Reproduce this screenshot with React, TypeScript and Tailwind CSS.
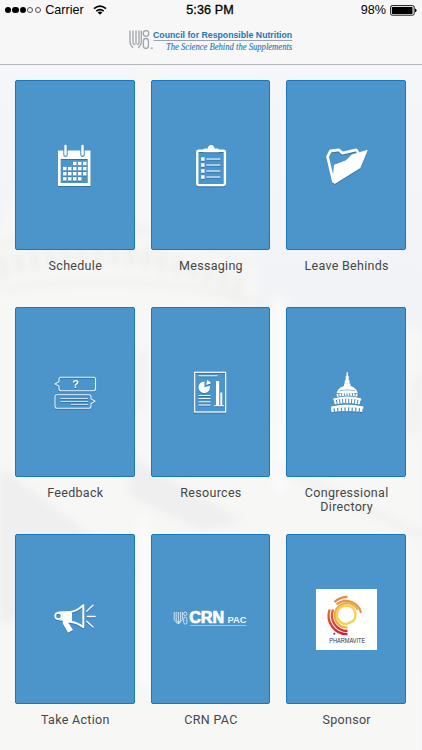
import type { ReactNode } from 'react';

type Tile = { id: string; label: string; icon: ReactNode };

function Icon({ children }: { children: ReactNode }) {
  return (
    <svg viewBox="0 0 60 60" className="h-[60px] w-[60px] overflow-visible drop-shadow-[0_1px_0.5px_rgba(20,80,140,0.5)]" fill="none" stroke="none">
      {children}
    </svg>
  );
}

function CalendarIcon() {
  const rows = [[2, 3, 4], [0, 1, 2, 3, 4], [0, 1, 2, 3, 4], [0, 1, 2, 3]];
  return (
    <Icon>
      <path fill="#fff" fillRule="evenodd" d="M13 15.5h32.5V51H13zM15.7 24v24h27V24z" />
      <path stroke="#4b95cb" strokeWidth="4.5" strokeLinecap="round" d="M20.5 15v4.8M37.5 15v4.8" />
      <path stroke="#fff" strokeWidth="2.4" strokeLinecap="round" d="M20.5 11v8.5M37.5 11v8.5" />
      {rows.map((cols, r) =>
        cols.map((c) => <rect key={`${r}-${c}`} x={18 + c * 5} y={26.8 + r * 5.1} width="3.5" height="3.5" fill="#fff" />)
      )}
    </Icon>
  );
}

function ClipboardIcon() {
  return (
    <Icon>
      <g transform="translate(.7 .3)">
        <rect x="16.6" y="15.4" width="27.6" height="34.4" rx="1.5" stroke="#fff" strokeWidth="2.4" />
        <path fill="#fff" d="M22.5 17v-1.8c0-1.4.8-1.9 1.8-1.9h2.7c.3-2.2 1.4-3.5 3.4-3.5s3.1 1.3 3.4 3.5h2.7c1 0 1.8.5 1.8 1.9V17z" />
        {[22, 28, 34, 40].map((y) => (
          <g key={y} fill="#fff">
            <rect x="20.4" y={y} width="3.5" height="3.5" />
            <rect x="25.6" y={y + 1.2} width="14" height="1.1" />
          </g>
        ))}
      </g>
    </Icon>
  );
}

function FolderIcon() {
  return (
    <Icon>
      <g transform="translate(.5 .3)">
        <path stroke="#fff" strokeWidth="2.8" strokeLinejoin="round" strokeLinecap="round" d="M16.8 46 11 21.5l3-5.8 8.2-1.2 3.8 3.3L39.6 14.5l1.6 2.2" />
        <path fill="#fff" stroke="#fff" strokeWidth="1.2" strokeLinejoin="round" d="M16.4 46.8 18 30l11.3-4.2 6.2-6 15-4.6-7.2 17.2-25 15.5z" />
      </g>
    </Icon>
  );
}

function FeedbackIcon() {
  return (
    <Icon>
      <path stroke="#e8f4fc" strokeWidth="1.1" strokeLinejoin="round" d="M15 15.3h33.5q2 0 2 2v9.4q0 2-2 2H16q-2 0-2-2v-2.5L10 22l4-2.2v-2.5q0-2 2-2z" />
      <path stroke="#e8f4fc" strokeWidth="1.1" strokeLinejoin="round" d="M12 32.7h32q2 0 2 2v2.2l4 2.4-4 2.4v2.5q0 2-2 2H12q-2 0-2-2v-9.5q0-2 2-2z" />
      <path stroke="#e8f4fc" strokeWidth="0.8" d="M15.5 36.5H43M15.5 39.5H43M26 42.5h17" />
      <text x="30.7" y="26" textAnchor="middle" fill="#fff" className="font-['Liberation_Sans'] text-[11px] font-bold">?</text>
    </Icon>
  );
}

function ReportIcon() {
  return (
    <Icon>
      <g transform="translate(.5 0)">
        <rect x="14.2" y="10.3" width="31" height="39.7" stroke="#fff" strokeWidth="1.2" />
        <path stroke="#fff" strokeWidth="1" d="M18 13.8h19M18 33.5h12M18 36.6h12M18 39.8h12M18 43h12" />
        <path fill="#fff" d="M24 19.5v5.7l5.3-1.5a5.8 5.8 0 1 1-5.3-4.2z" />
        <path fill="#fff" d="m25.7 23 1-5 1.6 1.3 1.2.4.8 1.8z" />
        <path fill="#fff" d="M35.5 19h3.2v24.5h-3.2zM39.8 30.5h2v13h-2zM33.5 43.3h10v1h-10z" />
      </g>
    </Icon>
  );
}

function CapitolIcon() {
  return (
    <Icon>
      <path fill="#fff" d="M30.7 10h1l.4 4.2h.7v4.3h.8v3.3h-4.9v-3.3h.9v-4.3h.7z" />
      <path fill="#fff" d="M28 21.5h6.5v2.5c3.8 1 6.6 3.8 7.4 7.2H20.7c.7-3.4 3.5-6.2 7.3-7.2z" />
      <path stroke="#fff" strokeWidth="3" strokeDasharray="1.9 0.8" d="M20.7 33.6q10.6-2.2 21.2 0" />
      <path fill="#fff" d="M17.3 38.6v-2.2q14-4.4 28 0v2.2q-14-3.6-28 0z" />
      <path stroke="#fff" strokeWidth="4.6" strokeDasharray="2.1 0.9" d="M18.2 40.4q13-3 26.2 0" />
      <path fill="#fff" d="M15.2 46.8v-2.4q16-3.6 32.2 0v2.4q-16-2.4-32.2 0z" />
      <path stroke="#fff" strokeWidth="4" strokeDasharray="2.5 1.1" d="M15.2 48.2q16-2 32.4 0" />
      <path stroke="#4b95cb" strokeWidth="0.6" d="M23.5 28.8q7.5-2 15.5 0M19.4 35.2q12-2.8 24 0M17 43.2q14-2.6 28.6 0" />
    </Icon>
  );
}

function MegaphoneIcon() {
  return (
    <Icon>
      <circle cx="13.4" cy="27" r="3.2" stroke="#fff" strokeWidth="1.8" />
      <path fill="#fff" d="M12.5 22.5 26.5 22v11.5l-3.2.3L28 41l-5 2.7-5.3-9.3v-3l-4.2.3q3.9-1 3.9-4.7 0-3.8-4.9-4.5z" />
      <path stroke="#fff" strokeWidth="2" strokeLinejoin="round" d="M26 22.8q6-.7 12.3-6.7v22.2q-5.8-4.7-12.3-5.3z" />
      <path stroke="#fff" strokeWidth="1.3" strokeLinecap="round" d="m41.7 22.3 6.3-6M42.2 27.5h8M41.7 32.2l6.3 5.8" />
    </Icon>
  );
}

function CrnPacLogo() {
  return (
    <svg viewBox="0 0 90 60" className="h-[60px] w-[90px] overflow-visible" fill="none">
      <g stroke="#d9edfa" strokeWidth="0.9">
        <path d="M9.2 23v7.5l3.2 4.2M11.2 23v8l2.5 3.5M13.4 23v12M15.6 23v8l-2 3.5M17.4 23v7.5l-3.2 4.2" />
        <circle cx="20.3" cy="24.8" r="1.7" />
        <rect x="18.7" y="28" width="3.2" height="7" rx="1.5" />
      </g>
      <text x="24.2" y="34.2" textLength="35" lengthAdjust="spacingAndGlyphs" fill="#fff" stroke="#fff" strokeWidth="0.7" className="font-['Liberation_Sans'] text-[15.6px] font-bold">CRN</text>
      <text x="62.5" y="34.2" textLength="19" lengthAdjust="spacingAndGlyphs" fill="#eef7fd" className="font-['Liberation_Sans'] text-[8.8px] font-bold">PAC</text>
      <path stroke="#a9d2ee" strokeWidth="0.8" d="M25 36.5h56.5" />
    </svg>
  );
}

function PharmaviteLogo() {
  return (
    <svg viewBox="0 0 61 61" className="h-[61px] w-[61px] overflow-visible bg-white" fill="none">
      <defs>
        <linearGradient id="ember" gradientUnits="userSpaceOnUse" x1="0" y1="8" x2="0" y2="46">
          <stop offset="0" stopColor="#ee8a3c" />
          <stop offset="0.5" stopColor="#e2583a" />
          <stop offset="1" stopColor="#c9202f" />
        </linearGradient>
      </defs>
      <g stroke="url(#ember)" strokeWidth="2.3">
        <path d="M31.5 7.8A18.7 18.7 0 0 0 18.5 13" />
        <path d="M13.6 20.5A18.7 18.7 0 0 0 31.5 45.2" />
        <path d="M17 20.5A15.7 15.7 0 0 0 31.5 42" />
      </g>
      <path stroke="#ee9440" strokeWidth="2.1" d="M20.5 15.4A15.2 15.2 0 0 1 45 24" />
      <path stroke="#f3ab43" strokeWidth="2.2" d="M31.5 38.7A12.3 12.3 0 1 1 42 21" />
      <path stroke="#f8cf55" strokeWidth="2.4" d="M31.5 35A9.3 9.3 0 1 1 37.5 31.5Q34.5 34 31.5 34" />
      <circle cx="18.3" cy="44.8" r="1" fill="#4b4b4b" />
      <text x="13.2" y="54" textLength="36" lengthAdjust="spacingAndGlyphs" fill="#333" className="font-['Liberation_Sans'] text-[6.4px]">PHARMAVITE</text>
    </svg>
  );
}

function CouncilLogo() {
  return (
    <svg viewBox="0 0 174 26" className="h-[26px] w-[174px] overflow-visible" fill="none">
      <g transform="translate(4 0)">
        <g stroke="#a3a5a8" strokeWidth="1.3">
          <path d="M2 2.5V14.5q0 2 3 5.3M5 2.5V15l1.6 2M8 2.5v14M11 2.5V15l-1.6 2M13.3 2.5v12q0 2-3 5.3" />
          <circle cx="18" cy="5.5" r="2.8" />
          <rect x="15.4" y="10.5" width="5" height="10" rx="2.4" />
        </g>
        <circle cx="23.8" cy="20.2" r="1" fill="#a3a5a8" />
        <text x="25" y="10" textLength="139.2" lengthAdjust="spacingAndGlyphs" fill="#2176b9" className="font-['Liberation_Sans'] text-[9.5px] font-bold">Council for Responsible Nutrition</text>
        <path stroke="#9b9fb0" strokeWidth="1" d="M25.5 12.5h138.8" />
        <text x="38" y="22.1" textLength="126.2" lengthAdjust="spacingAndGlyphs" fill="#2a7dbd" stroke="#2a7dbd" strokeWidth="0.15" className="font-['Liberation_Serif'] text-[9.8px] italic">The Science Behind the Supplements</text>
      </g>
    </svg>
  );
}

function StatusBar() {
  return (
    <div className="grid h-5 grid-cols-3 items-center pr-[5px] pl-[5px] text-[12.6px] leading-5 text-black">
      <div className="flex items-center">
        <div className="flex gap-[1.2px]">
          {[1, 2, 3].map((n) => (
            <span key={n} className="h-[6.2px] w-[6.2px] rounded-full bg-black" />
          ))}
          {[4, 5].map((n) => (
            <span key={n} className="h-[6.2px] w-[6.2px] rounded-full border border-neutral-600" />
          ))}
        </div>
        <span className="ml-[4.5px]">Carrier</span>
        <svg viewBox="0 0 14 10" className="ml-[9px] h-[10px] w-[14px]" fill="none" stroke="#000" strokeWidth="1.7">
          <path d="M1 3.7q6-5.2 12 0M3.3 6.2q3.7-3.2 7.4 0" />
          <path fill="#000" stroke="none" d="m7 9.8-2.3-2.4q2.3-1.8 4.6 0z" />
        </svg>
      </div>
      <div className="pr-[2px] text-center tracking-[0.1px] [-webkit-text-stroke:0.3px_black]">5:36 PM</div>
      <div className="flex items-center justify-end gap-[4px]">
        <span>98%</span>
        <svg viewBox="0 0 27 11" className="h-[11px] w-[27px]">
          <rect x="0.6" y="0.6" width="23.6" height="9.6" rx="1.6" fill="none" stroke="#000" strokeWidth="0.9" />
          <rect x="1.9" y="1.9" width="20.6" height="7" rx="0.5" />
          <path d="M25 3.6q1.6.5 1.6 1.8T25 7.2z" />
        </svg>
      </div>
    </div>
  );
}

// faded capitol dome behind the tiles
function Backdrop() {
  return (
    <svg viewBox="0 0 422 685" preserveAspectRatio="none" className="absolute inset-0 h-full w-full" fill="none">
      <defs>
        <linearGradient id="sky" x1="0" y1="0" x2="0" y2="1">
          <stop offset="0" stopColor="#f4f6fa" />
          <stop offset="0.35" stopColor="#f1f3f6" />
          <stop offset="0.5" stopColor="#f5f5f5" />
          <stop offset="1" stopColor="#f6f6f5" />
        </linearGradient>
        <filter id="soft">
          <feGaussianBlur stdDeviation="4" />
        </filter>
      </defs>
      <path fill="url(#sky)" d="M0 0h422v685H0z" />
      <g filter="url(#soft)">
        <path fill="#f7f7f6" d="M130 0h28l10 35q70 60 78 125l12 50v30l164 20v425H-5V175q15-85 140-140z" />
        <path stroke="#efefee" strokeWidth="5" d="M0 178q125-45 250 20M0 222q125-24 265 14" />
        <path stroke="#ededec" strokeWidth="22" strokeDasharray="7 9" d="M0 200q130-34 250 22" />
        <path stroke="#f1f1f1" strokeWidth="60" strokeDasharray="9 14" d="M135 310l287 26" />
        <path fill="#efefef" d="M0 395l80 60 60 45-140 50zM130 385l115 65-45 8-70-34z" />
        <path fill="#fbfbfb" d="M138 445h12v165h-12zM273 230h13v190h-13z" />
        <path stroke="#f0f0f0" strokeWidth="7" d="M280 395l145 70" />
      </g>
    </svg>
  );
}

const tiles: Tile[] = [
  { id: 'schedule', label: 'Schedule', icon: <CalendarIcon /> },
  { id: 'messaging', label: 'Messaging', icon: <ClipboardIcon /> },
  { id: 'leave-behinds', label: 'Leave Behinds', icon: <FolderIcon /> },
  { id: 'feedback', label: 'Feedback', icon: <FeedbackIcon /> },
  { id: 'resources', label: 'Resources', icon: <ReportIcon /> },
  { id: 'directory', label: 'Congressional Directory', icon: <CapitolIcon /> },
  { id: 'take-action', label: 'Take Action', icon: <MegaphoneIcon /> },
  { id: 'crn-pac', label: 'CRN PAC', icon: <CrnPacLogo /> },
  { id: 'sponsor', label: 'Sponsor', icon: <PharmaviteLogo /> },
];

export default function App() {
  return (
    <div className="flex h-[750px] w-[422px] flex-col overflow-hidden bg-[#f5f5f5] font-['Liberation_Sans',sans-serif]">
      <header className="h-[65px] shrink-0 border-b border-[#b3b5b9] bg-[#f7f7f7]">
        <StatusBar />
        <div className="flex justify-center pt-[8px] pr-[1px]">
          <CouncilLogo />
        </div>
      </header>
      <main className="relative flex-1">
        <Backdrop />
        <div className="relative grid auto-rows-[227px] grid-cols-3 gap-x-4 pt-[15px] pr-[16px] pl-[15px]">
          {tiles.map((tile) => (
            <div key={tile.id} className="flex flex-col items-center">
              <button className="flex h-[170px] w-full items-center justify-center rounded-[2px] border border-[#1878bd] bg-[#4b95cb]">
                {tile.icon}
              </button>
              <div className="mt-[9px] w-[100px] pl-px text-center font-['Roboto',sans-serif] text-[12.5px] leading-[14px] tracking-[0.3px] text-[#464646]">
                {tile.label}
              </div>
            </div>
          ))}
        </div>
      </main>
    </div>
  );
}
